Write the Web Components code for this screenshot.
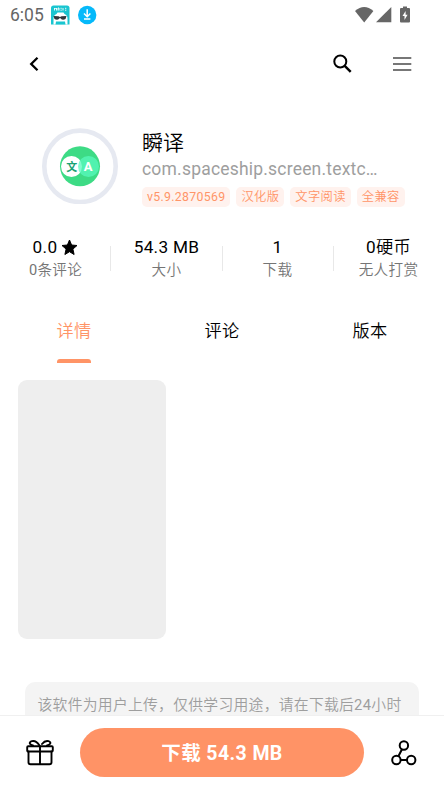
<!DOCTYPE html>
<html lang="zh-CN">
<head>
<meta charset="utf-8">
<title>瞬译</title>
<style>
html,body{margin:0;height:100%;overflow:hidden;background:#fff}
body{font-family:Roboto,"Noto Sans CJK SC DemiLight","Noto Sans CJK SC",sans-serif;color:#000}
</style>
</head>
<body>
<app-page></app-page>
<script>
const define = (name, html) => {
  const t = document.createElement('template');
  t.innerHTML = html;
  customElements.define(name, class extends HTMLElement {
    constructor() {
      super();
      this.attachShadow({mode: 'open'}).append(t.content.cloneNode(true));
    }
  });
};

define('status-bar', `<style>
:host{display:flex;height:30px;box-sizing:border-box;padding:0 33px 0 10px;align-items:center;color:#666}
.time{font-size:17.500px;line-height:30px;width:41px}
svg{display:block;flex:none}
.app{margin-right:8px}.wifi{margin-left:auto;margin-right:2px}.sig{margin-right:8px}
</style>
<span class="time">6:05</span>
<svg class="app" width="19" height="20" viewBox="0 0 19 20"><path d="M0 3Q0 .5 2.500.5h13.500q2.500 0 2.500 2.500v16.500H0z" fill="#19c5d0"/><path d="M2.500 19.500V13.500q0-3.500 3-4.500l1-1.500h6l1 1.500q3 1 3 4.500v6z" fill="#fff"/><path d="M5 16.500h9l.5 3H4.500z" fill="#19c5d0"/><path d="M3.500 5.500V3l1 1 1-1v2.500M7 5.500V3h1v2.500M9.500 3.300h1.200M9.500 5.200h1.200M12 3v2.500M14 3.300h1.300M14 5.200h1.300" stroke="#fff" stroke-width=".9" fill="none"/><path d="M2.500 11l5 .3 1.500.7 1.500-.7 5-.3-1 3q-3 1.800-5-.8h-1q-2 2.600-5 .8z" fill="#30373c"/></svg>
<svg width="19" height="20" viewBox="0 0 19 20"><circle cx="9.200" cy="10" r="9.200" fill="#05b9fa"/><path d="M9.200 4.300v7M6 8.500l3.200 3.200 3.200-3.200M6 14h6.400" stroke="#fff" stroke-width="1.500" fill="none"/></svg>
<svg class="wifi" width="19" height="18" viewBox="0 0 19 18"><path d="M0 5Q9.200-2.800 18.400 5L9.200 16.500z" fill="#666"/></svg>
<svg class="sig" width="16" height="18" viewBox="0 0 16 18"><path d="M0 16.300L15.300 1v15.300z" fill="#666"/></svg>
<svg width="11" height="18" viewBox="0 0 11 18"><path d="M1 2h2V.5h4V2h2q1 0 1 1v12.500q0 1-1 1H1q-1 0-1-1V3q0-1 1-1z" fill="#666"/><path d="M5.600 5v3.700h2L4.500 14v-3.900H2.500z" fill="#fff"/></svg>`);

define('nav-bar', `<style>
:host{display:flex;height:68px;align-items:center;padding:0 32px 0 28px;box-sizing:border-box}
svg{display:block}.search{margin-left:auto;margin-right:40px}
</style>
<svg width="12" height="18" viewBox="0 0 12 18"><path d="M9.500 2.700L3.200 9l6.300 6.300" stroke="#000" stroke-width="2.300" fill="none"/></svg>
<svg class="search" width="20" height="20" viewBox="0 0 20 20"><circle cx="8.300" cy="7.500" r="6" stroke="#000" stroke-width="2" fill="none"/><path d="M12.500 11.700l6.200 6.200" stroke="#000" stroke-width="2.400"/></svg>
<svg width="20" height="20" viewBox="0 0 20 20"><path d="M1 4h18.300M1 10h18.300M1 16h18.300" stroke="#777" stroke-width="2"/></svg>`);

define('tag-chip', `<style>
:host{display:block;height:20px;line-height:21px;padding:0 5px;border-radius:5px;background:#fff2ee;color:#ff9568;font-size:12.300px;letter-spacing:.32px;white-space:nowrap}
</style><slot></slot>`);

define('app-head', `<style>
:host{display:flex;height:118px;padding:0 0 0 42px;align-items:flex-start}
.logo{flex:none;width:76px;height:76px;margin:30px 24px 0 0;display:block}
.info{padding-top:31px}
.name{font-size:21px;line-height:28px;height:27px}
.pkg{font-size:17.500px;line-height:26px;height:26px;color:#9e9e9e;letter-spacing:.2px;width:244px;white-space:nowrap}
.tags{display:flex;gap:6px;margin-top:5px}
text{font-family:Roboto,"Noto Sans CJK SC",sans-serif;font-weight:700;text-anchor:middle}
</style>
<svg class="logo" viewBox="0 0 76 76"><circle cx="38" cy="38.300" r="35.700" fill="#fff" stroke="#e6e9f1" stroke-width="4.600"/><circle cx="38" cy="38.300" r="20" fill="#3ddb85"/><circle cx="29.500" cy="38.500" r="10.500" fill="#fff"/><circle cx="46.500" cy="38.500" r="10.500" fill="#58fabd" fill-opacity=".75"/><text x="29.800" y="42.500" font-size="11" fill="#1ba273">文</text><text x="46" y="43" font-size="13" fill="#fff">A</text></svg>
<div class="info"><div class="name">瞬译</div><div class="pkg">com.spaceship.screen.textc…</div>
<div class="tags"><tag-chip>v5.9.2870569</tag-chip><tag-chip>汉化版</tag-chip><tag-chip>文字阅读</tag-chip><tag-chip>全兼容</tag-chip></div></div>`);

define('stat-cell', `<style>
:host{display:block;flex:1;text-align:center}
.v{display:flex;justify-content:center;align-items:center;gap:4px;font-size:17.200px;line-height:23px;height:23px;letter-spacing:.3px}
.l{font-size:14.600px;line-height:23px;height:23px;color:#757575;letter-spacing:.3px}
</style><div class="v"><slot></slot></div><div class="l"><slot name="label"></slot></div>`);

define('stat-row', `<style>
:host{display:flex;height:77px;padding-top:20px;box-sizing:border-box}
i{width:1px;height:25px;margin:10px -0.500px 0;background:#e8e8e8;flex:none}
i:first-of-type{margin-left:-1px;margin-right:0}
svg{margin-top:-1px}
span{display:contents}
</style>
<stat-cell>0.0<svg width="17" height="17" viewBox="0 0 17 17"><path d="M8.500 1l2.100 5 5.400.5-4.100 3.600 1.200 5.400-4.600-2.800-4.600 2.800 1.200-5.400L1 6.500 6.400 6z" stroke="#000" stroke-linejoin="round"/></svg><span slot="label">0条评论</span></stat-cell><i></i>
<stat-cell>54.3 MB<span slot="label">大小</span></stat-cell><i></i>
<stat-cell>1<span slot="label">下载</span></stat-cell><i></i>
<stat-cell>0硬币<span slot="label">无人打赏</span></stat-cell>`);

define('tab-item', `<style>
:host{flex:1;display:flex;flex-direction:column;align-items:center;font-size:17.200px;line-height:30px;letter-spacing:.2px}
i{width:34px;height:3.500px;margin-top:13px;border-radius:3px 3px 0 0}
:host([active]){color:#ff9466}:host([active]) i{background:#ff9466}
</style><slot></slot><i></i>`);

define('tab-row', `<style>:host{display:flex;height:87px;padding-top:23px;box-sizing:border-box}</style>
<tab-item active>详情</tab-item><tab-item>评论</tab-item><tab-item>版本</tab-item>`);

define('detail-pane', `<style>
:host{display:block;flex:1;min-height:0;overflow:hidden}
.shot{width:148px;height:258.500px;border-radius:9px;background:#eee;margin-left:18.400px}
.note{margin:43.500px 25px 0;padding:12px 0 0 12.500px;height:70px;border-radius:10px;background:#f4f4f4;color:#9e9e9e;font-size:14.800px;line-height:23px;letter-spacing:.28px;white-space:nowrap}
</style><div class="shot"></div><div class="note">该软件为用户上传，仅供学习用途，请在下载后24小时</div>`);

define('download-bar', `<style>
:host{display:flex;height:74px;box-sizing:border-box;border-top:1px solid #f0f0f0;padding:12px 26px 0;background:#fff;align-items:flex-start}
svg{display:block;flex:none;margin-top:11px}
button{font:700 19.500px/50px Roboto,"Noto Sans CJK SC",sans-serif;letter-spacing:.4px;flex:none;width:284px;height:49px;border:0;padding:1px 0 0;box-sizing:border-box;border-radius:25px;background:#ff9366;color:#fff;margin:0 27px 0 26px}
</style>
<svg width="28" height="28" viewBox="0 0 28 28"><g fill="none" stroke="#000" stroke-width="1.900" stroke-linecap="round" stroke-linejoin="round"><rect x="1.200" y="7.300" width="25.600" height="5.200" rx="1"/><path d="M2.500 12.500v10.800q0 2 2 2h19q2 0 2-2V12.500M14 7.500v17.500M13.500 6.500Q10 1.200 6 2.200C2 3.400 4 6 7 6.500M16 5Q19 1.200 22.500 2.200C26 3.400 24 6 21 6.500"/></g></svg>
<button>下载 54.3 MB</button>
<svg width="28" height="28" viewBox="0 0 28 28"><g fill="none" stroke="#000" stroke-width="2"><circle cx="12.900" cy="6.500" r="4.200"/><circle cx="5.400" cy="21" r="4.200"/><circle cx="20.200" cy="21" r="4.200"/><path d="M11 10.300L7.400 17.300M9.600 21h6.400"/></g></svg>`);

define('app-page', `<style>:host{display:flex;flex-direction:column;width:444px;height:789px;overflow:hidden;background:#fff}
status-bar,nav-bar,app-head,stat-row,tab-row,download-bar{flex:none}</style>
<status-bar></status-bar><nav-bar></nav-bar><app-head></app-head><stat-row></stat-row><tab-row></tab-row><detail-pane></detail-pane><download-bar></download-bar>`);
</script>
</body>
</html>
